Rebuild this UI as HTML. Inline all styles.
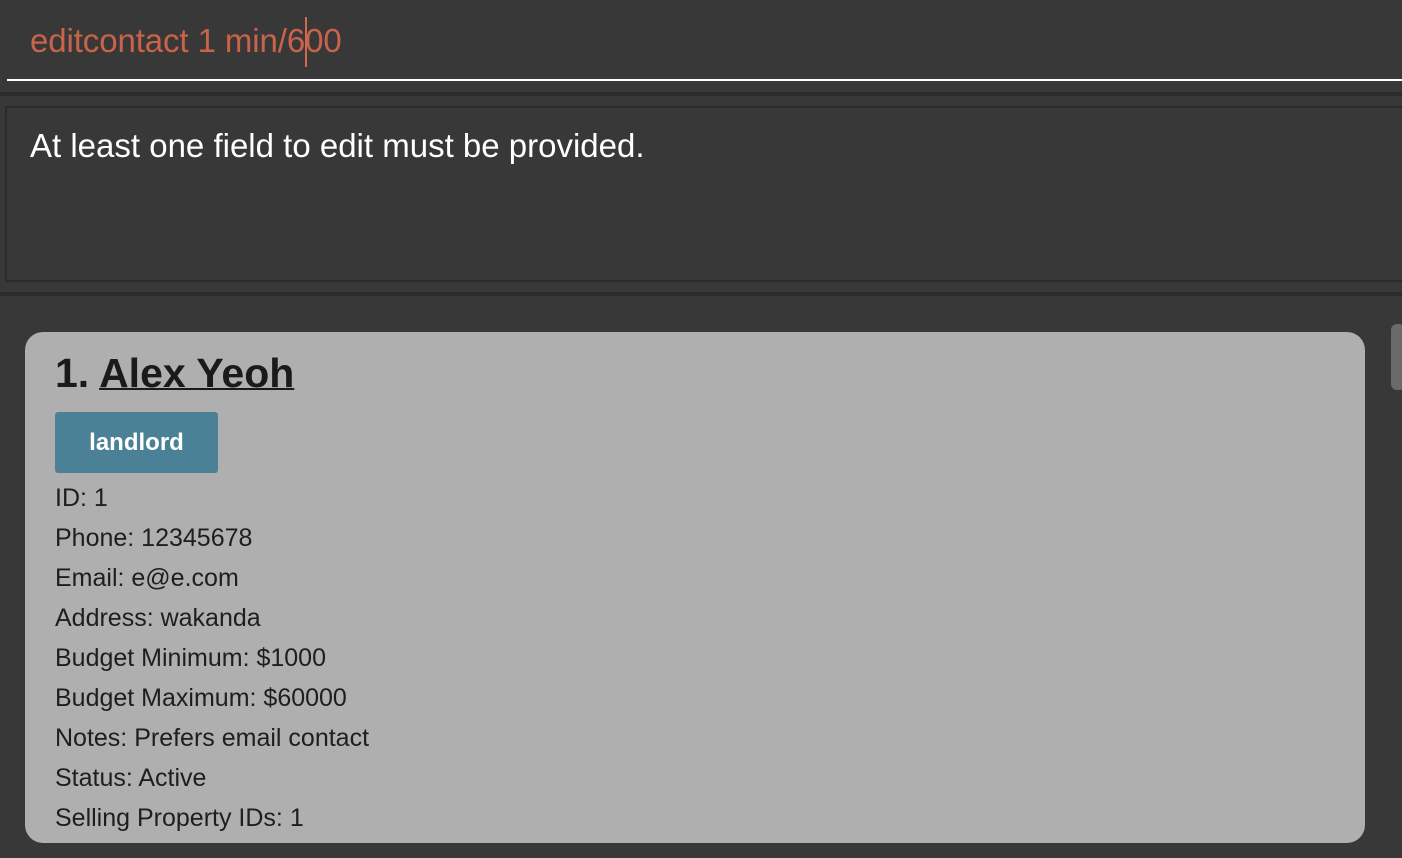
<!DOCTYPE html>
<html><head><style>
body{margin:0;width:1402px;height:858px;background:#383838;overflow:hidden;font-family:"Liberation Sans",sans-serif;position:relative}
.cmd{position:absolute;left:30px;top:22px;font-size:33px;color:#c9634a;letter-spacing:-0.1px}
.caret{position:absolute;left:305px;top:17px;width:2px;height:50px;background:#d3694e}
.uline{position:absolute;left:7px;top:79px;width:1395px;height:2px;background:#fff}
.sep{position:absolute;left:0;width:1402px;height:4px;background:#2b2b2b}
.res{position:absolute;left:5px;top:106px;width:1400px;border:2px solid #2b2b2b;box-sizing:border-box;height:176px}
.msg{position:absolute;left:30px;top:127px;font-size:33px;color:#fff;letter-spacing:0}
.card{position:absolute;left:25px;top:332px;width:1340px;height:511px;background:#afafaf;border-radius:18px}
.title{position:absolute;left:55px;top:350px;font-size:41px;font-weight:bold;color:#1a1a1a}
.title u{text-decoration-thickness:2px}
.tag{position:absolute;left:55px;top:412px;width:163px;height:61px;background:#4b8196;border-radius:3px;color:#fff;font-weight:bold;font-size:24px;text-align:center;line-height:61px}
.f{position:absolute;left:55px;font-size:25px;color:#1e1e1e}
.thumb{position:absolute;left:1391px;top:324px;width:14px;height:66px;background:#6a6a6a;border-radius:6px}
</style></head><body>
<div class="cmd">editcontact 1 min/600</div>
<div class="caret"></div>
<div class="uline"></div>
<div class="sep" style="top:92px"></div>
<div class="res"></div>
<div class="msg">At least one field to edit must be provided.</div>
<div class="sep" style="top:292px"></div>
<div class="card"></div>
<div class="thumb"></div>
<div class="title">1. <u>Alex Yeoh</u></div>
<div class="tag">landlord</div>
<div class="f" style="top:484px">ID: 1</div>
<div class="f" style="top:524px">Phone: 12345678</div>
<div class="f" style="top:564px">Email: e@e.com</div>
<div class="f" style="top:604px">Address: wakanda</div>
<div class="f" style="top:644px">Budget Minimum: $1000</div>
<div class="f" style="top:684px">Budget Maximum: $60000</div>
<div class="f" style="top:724px">Notes: Prefers email contact</div>
<div class="f" style="top:764px">Status: Active</div>
<div class="f" style="top:804px">Selling Property IDs: 1</div>
</body></html>
